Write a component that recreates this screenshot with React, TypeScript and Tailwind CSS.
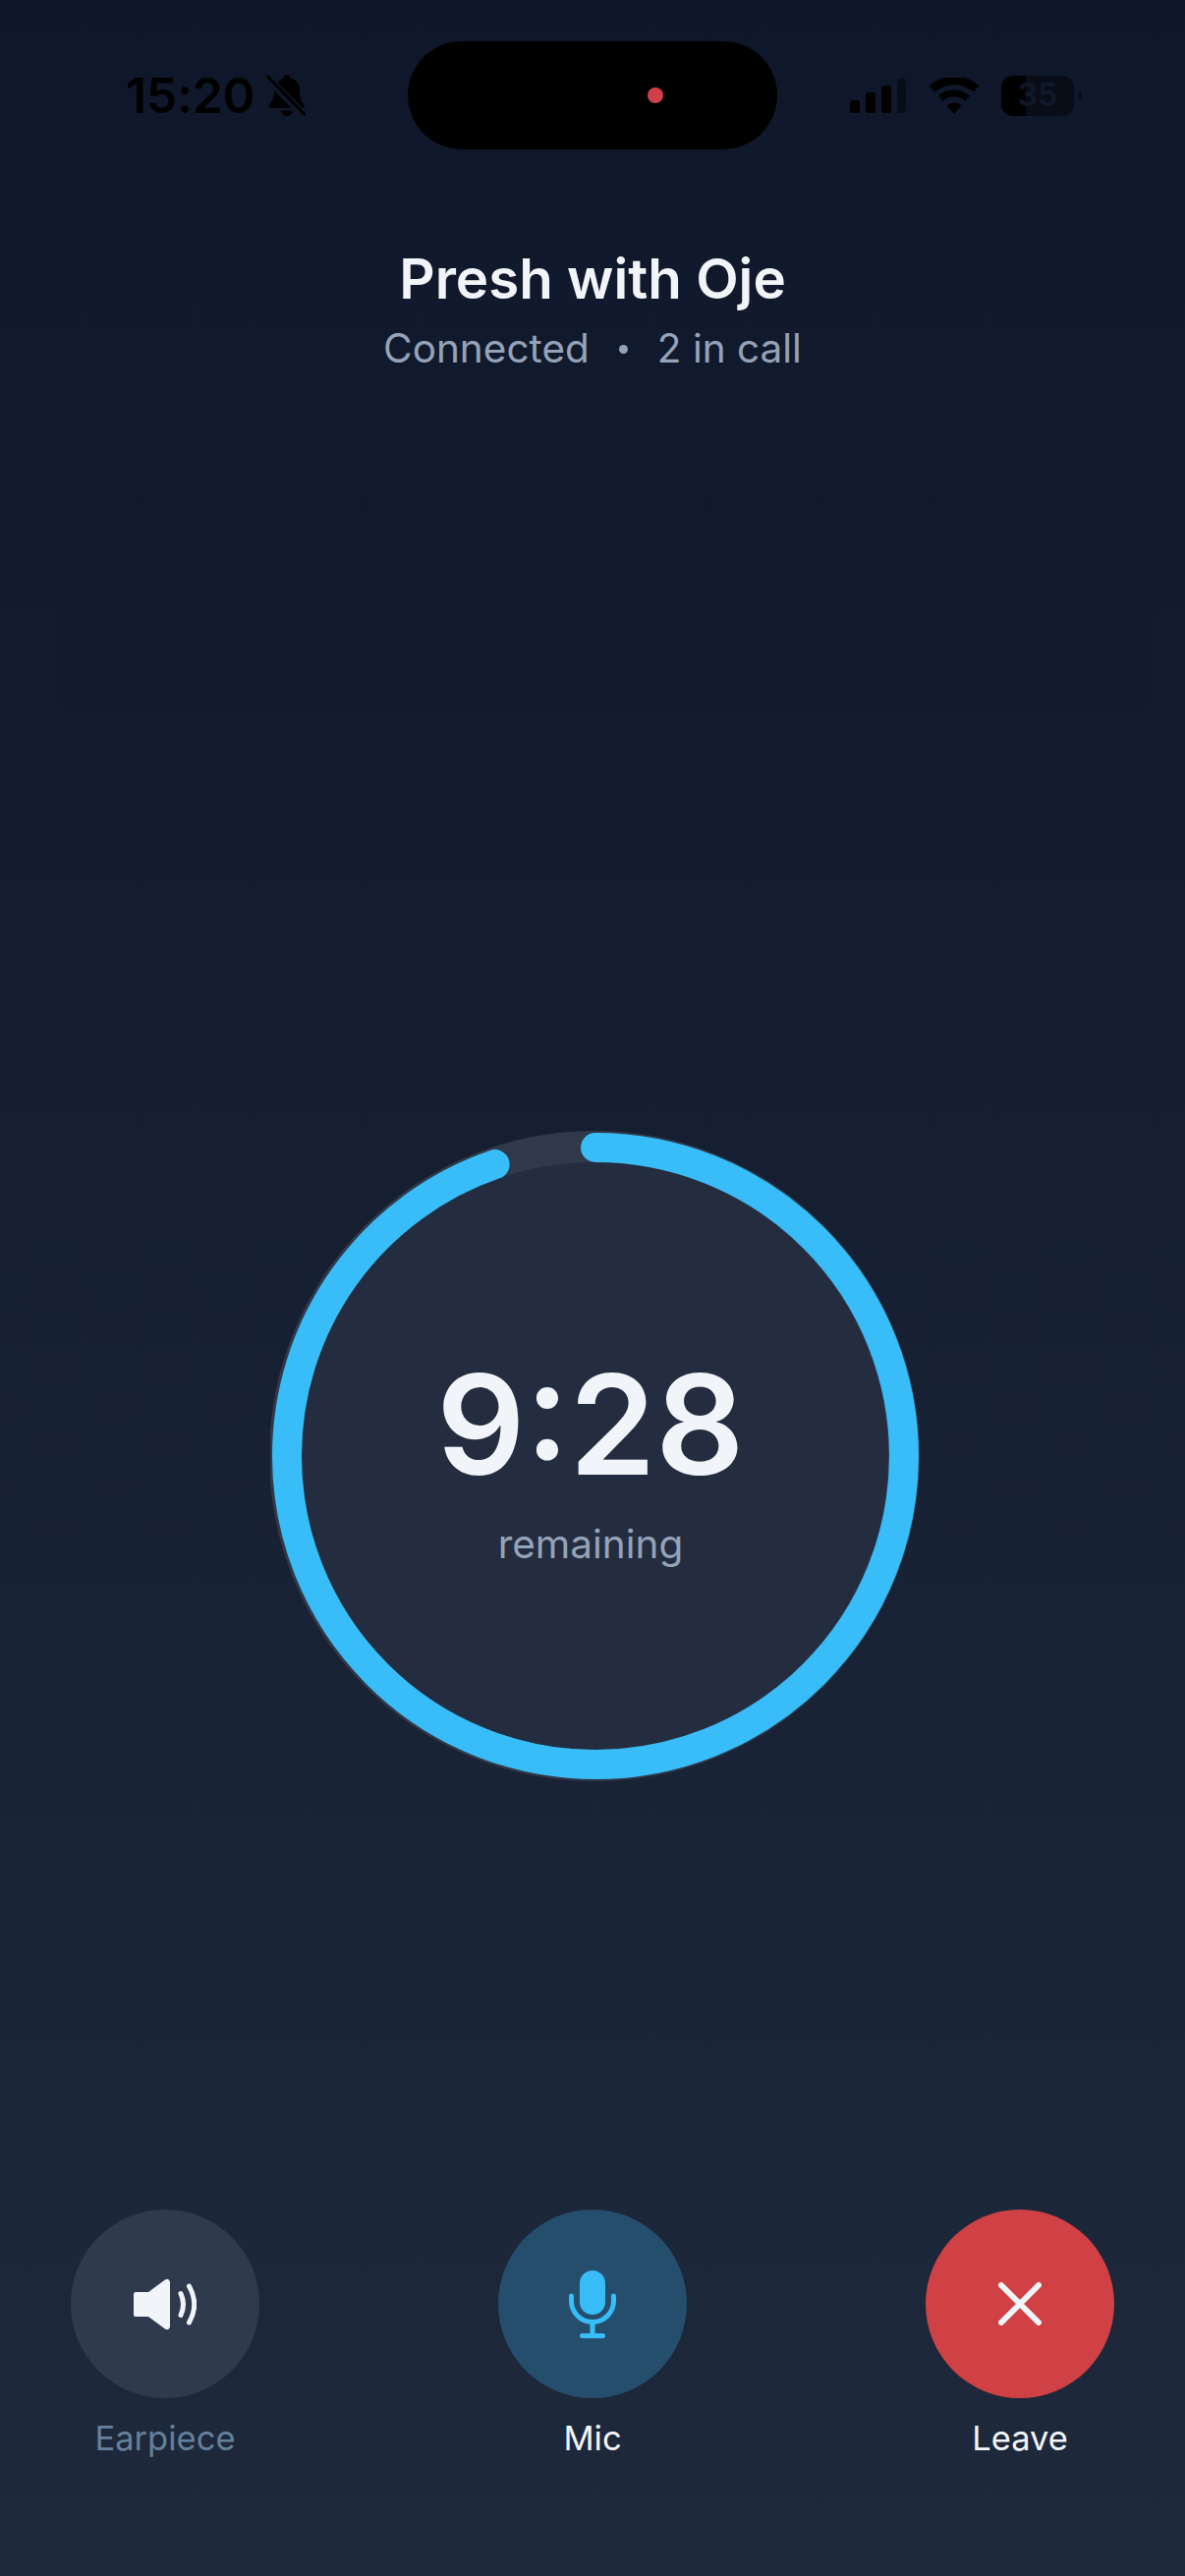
const font = { fontFamily: "Inter, 'Noto Sans', sans-serif" };

function Ring() {
  const r = 314;
  const c = 2 * Math.PI * r;
  return (
    <div className="relative w-[662px] h-[664px]">
      <svg width="662" height="664" viewBox="0 0 662 664" className="block">
        <circle cx="330" cy="332" r="330" fill="#232d3f" />
        <circle cx="330" cy="332" r="315" fill="none" stroke="#303949" strokeWidth="32" />
        <circle
          cx="331"
          cy="332"
          r={r}
          fill="none"
          stroke="#38bdf8"
          strokeWidth="30"
          strokeLinecap="round"
          strokeDasharray={`${c * 0.9467} ${c}`}
          transform="rotate(-90 331 332)"
        />
      </svg>
      <div className="absolute inset-0 flex flex-col items-center pr-[10px]">
        <div className="mt-[213px] text-[141px] leading-[174px] font-semibold text-[#f1f5f9]">9:28</div>
        <div className="mt-[10px] text-[40.500px] leading-[50px] text-[#94a3b8]">remaining</div>
      </div>
    </div>
  );
}

function ActionButton({ bg, label, labelClass, children }: { bg: string; label: string; labelClass: string; children: React.ReactNode }) {
  return (
    <div className="flex flex-col items-center w-[192px]">
      <div className={`w-[192px] h-[192px] rounded-full flex items-center justify-center ${bg}`}>{children}</div>
      <div className={`mt-[19px] text-[34.500px] leading-[44px] whitespace-nowrap ${labelClass}`}>{label}</div>
    </div>
  );
}

export default function App() {
  return (
    <div className="w-[1206px] h-[2622px] overflow-hidden flex flex-col bg-gradient-to-b from-[#0f172a] to-[#1e293b]" style={font}>
      <div className="flex items-center pt-[42px] h-[152px]">
        <div className="flex items-center w-[415px] pl-[128px] text-black">
          <span className="text-[50px] leading-[60px] font-semibold tracking-[-0.300px]">15:20</span>
          <svg width="40" height="44" viewBox="0 0 40 44" className="ml-[12px]">
            <path d="M21 1a3.400 3.400 0 0 1 3.400 3.200C31 6 34 11 34 18c0 6 1.500 10 4.500 13.500 1.200 1.500.4 3.500-1.600 3.500H4.500c-2 0-2.800-2-1.600-3.500C6 28 8 24 8 18c0-7 6-12 9.600-13.800A3.400 3.400 0 0 1 21 1z" fill="currentColor" />
            <path d="M15 37.500h12a6 5.500 0 0 1-12 0z" fill="currentColor" />
            <path d="M1 4l37 38" stroke="#0e1829" strokeWidth="8" />
            <path d="M1.500 3l37 38" stroke="currentColor" strokeWidth="3" strokeLinecap="round" />
          </svg>
        </div>
        <div className="w-[376px] h-[110px] rounded-[55px] bg-black flex items-center justify-end pr-[116px]">
          <div className="w-4 h-4 rounded-full bg-[#d1404a]" />
        </div>
        <div className="flex items-center pl-[74px] text-black">
          <svg width="57" height="35" viewBox="0 0 57 35">
            <rect x="0" y="22" width="10" height="13" rx="2.500" fill="currentColor" />
            <rect x="16" y="14" width="10" height="21" rx="2.500" fill="currentColor" />
            <rect x="32" y="7" width="10" height="28" rx="2.500" fill="currentColor" />
            <rect x="48" y="0" width="9" height="35" rx="2.500" fill="currentColor" opacity="0.45" />
          </svg>
          <svg width="52" height="37" viewBox="0 0 52 37" className="ml-[23px]">
            <path d="M26 37l-7.500-8.500a11 11 0 0 1 15 0zM14.500 24l-4.500-5.500a24 24 0 0 1 32 0L37.500 24a17 17 0 0 0-23 0zM6.500 14.500L0.500 8.500a37 37 0 0 1 51 0l-6 6a30 30 0 0 0-39 0z" fill="currentColor" />
          </svg>
          <div className="relative ml-[22px] w-[74px] h-[41px] rounded-[12px] bg-black/45 overflow-hidden">
            <div className="absolute left-0 top-0 bottom-0 w-[25px] bg-black" />
            <div className="absolute inset-0 flex items-center justify-center text-[32px] leading-none font-bold text-[#0e1829]">35</div>
          </div>
          <div className="ml-[5px] w-[2px] h-[8px] rounded-full bg-black/60" />
        </div>
      </div>

      <div className="mt-[98px] flex flex-col items-center">
        <div className="text-[56.500px] leading-[68px] font-semibold text-[#f1f5f9]">Presh with Oje</div>
        <div className="mt-[11px] flex items-center text-[40.500px] leading-[52px] text-[#94a3b8]">
          <span>Connected</span>
          <span className="mx-[30px] w-[9px] h-[9px] rounded-full bg-[#94a3b8]" />
          <span>2 in call</span>
        </div>
      </div>

      <div className="ml-[60px] mr-[36px] h-[220px] mt-[122px] bg-[#0f172a]/20" />

      <div className="mt-[427px] pl-[275px]">
        <Ring />
      </div>

      <div className="mt-[435px] flex justify-between pl-[72px] pr-[72px]">
        <ActionButton bg="bg-[#2f3a4c]" label="Earpiece" labelClass="text-[#64809c]">
          <svg width="64" height="53" viewBox="0 0 64 53">
            <path d="M2 14h13L32 1.500q4-2 5 2v46q-1 4-5 2L15 39H2a2 2 0 0 1-2-2V16a2 2 0 0 1 2-2z" fill="#f1f5f9" />
            <path d="M48 15.500Q53 26.500 48 37.500M56.500 8Q67 26.500 56.500 45" fill="none" stroke="#f1f5f9" strokeWidth="5" strokeLinecap="round" />
          </svg>
        </ActionButton>
        <ActionButton bg="bg-[#254e6d]" label="Mic" labelClass="text-[#f1f5f9]">
          <svg width="48" height="69" viewBox="0 0 48 69">
            <rect x="11" y="0" width="26" height="45" rx="13" fill="#38bdf8" />
            <path d="M2.500 26v5a21.500 21.500 0 0 0 43 0v-5" fill="none" stroke="#38bdf8" strokeWidth="5" strokeLinecap="round" />
            <path d="M24 55v11M13.500 66.500h21" fill="none" stroke="#38bdf8" strokeWidth="5" strokeLinecap="round" />
          </svg>
        </ActionButton>
        <ActionButton bg="bg-[#d04145]" label="Leave" labelClass="text-[#f1f5f9]">
          <svg width="44" height="44" viewBox="0 0 44 44">
            <path d="M3 3l38 38M41 3L3 41" fill="none" stroke="#f1f5f9" strokeWidth="6" strokeLinecap="round" />
          </svg>
        </ActionButton>
      </div>
    </div>
  );
}
